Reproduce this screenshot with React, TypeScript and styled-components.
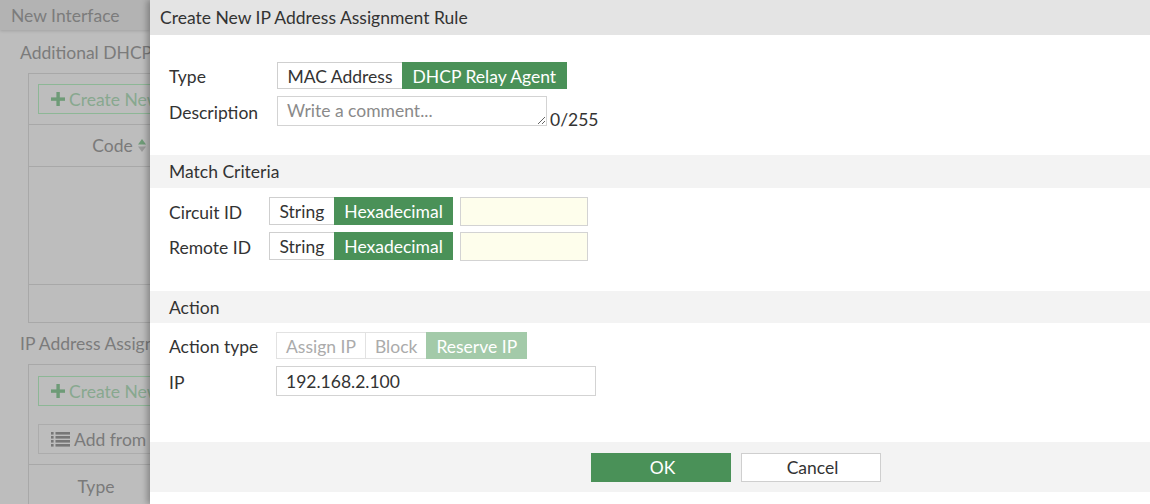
import React from 'react'
import styled, { createGlobalStyle } from 'styled-components'

const GlobalStyle = createGlobalStyle`
    html, body {
        margin: 0;
        padding: 0;
    }
    body {
        font-family: Lato, "Open Sans", sans-serif;
        font-size: 17.5px;
        color: #333;
    }
    * {
        box-sizing: border-box;
    }
`

const green = '#4a9158'

const Screen = styled.div`
    position: relative;
    width: 1150px;
    height: 504px;
    overflow: hidden;
    background: #bdbdbd;
`

/* ---------- page behind the dialog (dimmed) ---------- */

const BackPage = styled.div`
    width: 150px;
    height: 100%;
    overflow: hidden;
`

const PageHeader = styled.div`
    height: 30px;
    display: flex;
    align-items: center;
    padding-left: 11px;
    background: #b3b3b3;
    color: #7c7c7c;
    white-space: nowrap;
    box-shadow: 0 1px 3px rgba(0, 0, 0, 0.15);
`

const PageBody = styled.div`
    padding: 12px 0 0 20px;
`

const PageTitle = styled.div<{ $top?: number }>`
    height: 22px;
    line-height: 22px;
    margin-top: ${p => p.$top || 0}px;
    color: #7b7b7b;
    white-space: nowrap;
`

const TableBox = styled.div`
    width: 700px;
    margin: 9px 0 0 8px;
    border: 1px solid #a8a8a8;
`

const Toolbar = styled.div<{ $pt: number }>`
    display: flex;
    flex-direction: column;
    align-items: flex-start;
    gap: 18px;
    padding: ${p => p.$pt}px 0 10px 9px;
    border-bottom: 1px solid #a8a8a8;
`

const PageButton = styled.div<{ $green?: boolean }>`
    display: flex;
    align-items: center;
    gap: 4px;
    height: 30px;
    width: 200px;
    padding-left: 12px;
    border: 1px solid ${p => (p.$green ? '#8db796' : '#acacac')};
    color: ${p => (p.$green ? '#88a88f' : '#7a7a7a')};
    white-space: nowrap;
`

const HeadRow = styled.div<{ $h: number }>`
    height: ${p => p.$h}px;
    display: flex;
    align-items: center;
    border-bottom: 1px solid #a8a8a8;
`

const HeadCell = styled.div<{ $w: number }>`
    width: ${p => p.$w}px;
    display: flex;
    justify-content: center;
    align-items: center;
    gap: 5px;
    color: #7a7a7a;
`

const EmptyRow = styled.div<{ $h: number; $line?: boolean }>`
    height: ${p => p.$h}px;
    border-bottom: ${p => (p.$line ? '1px solid #a8a8a8' : 'none')};
`

const PlusIcon = () => (
    <svg width="14" height="14" viewBox="0 0 14 14">
        <rect x="5.4" y="0" width="3.4" height="14" fill="#6e9b77" />
        <rect x="0" y="5.4" width="14" height="3.4" fill="#6e9b77" />
    </svg>
)

const ListIcon = () => (
    <svg width="19" height="15" viewBox="0 0 19 15">
        {[0, 4, 8, 12].map(y => (
            <g key={y}>
                <rect x="0" y={y} width="2.6" height="2.6" fill="#777" />
                <rect x="4.5" y={y} width="14.5" height="2.6" fill="#777" />
            </g>
        ))}
    </svg>
)

const SortIcon = () => (
    <svg width="8" height="15" viewBox="0 0 8 15">
        <path d="M0 6.5 L4 1 L8 6.5 Z" fill="#6e9b77" />
        <path d="M0 8.5 L4 14 L8 8.5 Z" fill="#9a9a9a" />
    </svg>
)

/* ---------- dialog ---------- */

const Dialog = styled.div`
    position: absolute;
    top: 0;
    left: 150px;
    right: 0;
    bottom: 0;
    display: flex;
    flex-direction: column;
    background: #fff;
    box-shadow: -3px 0 6px rgba(0, 0, 0, 0.28);
`

const DialogHeader = styled.div`
    height: 35px;
    flex-shrink: 0;
    display: flex;
    align-items: center;
    padding-left: 10px;
    background: #e4e4e4;
    color: #333;
`

const Section = styled.div<{ $top: number }>`
    display: flex;
    flex-direction: column;
    gap: 7px;
    padding: 0 19px;
    margin-top: ${p => p.$top}px;
`

const SectionHeader = styled.div<{ $top: number; $h: number }>`
    height: ${p => p.$h}px;
    margin-top: ${p => p.$top}px;
    display: flex;
    align-items: center;
    padding-left: 19px;
    background: #f3f3f3;
    color: #333;
`

const Row = styled.div<{ $h: number }>`
    display: flex;
    align-items: center;
    height: ${p => p.$h}px;
`

const Label = styled.div<{ $w: number }>`
    width: ${p => p.$w}px;
    flex-shrink: 0;
    padding-top: 2px;
    color: #333;
    white-space: nowrap;
`

const ToggleGroup = styled.div`
    display: flex;
    height: 100%;
`

const Toggle = styled.div<{ $active?: boolean; $disabled?: boolean }>`
    display: flex;
    align-items: center;
    padding: 1px ${p => (p.$disabled ? 9 : 9.5)}px 0;
    margin-left: -1px;
    border: 1px solid
        ${p => (p.$active ? (p.$disabled ? '#a3caa9' : green) : p.$disabled ? '#e2e2e2' : '#cfcfcf')};
    background: ${p => (p.$active ? (p.$disabled ? '#a3caa9' : green) : '#fff')};
    color: ${p => (p.$active ? '#fff' : p.$disabled ? '#ababab' : '#333')};
    white-space: nowrap;
    &:first-child {
        margin-left: 0;
    }
`

const TextInput = styled.input<{ $w: number; $yellow?: boolean }>`
    width: ${p => p.$w}px;
    height: ${p => (p.$yellow ? 29 : 30)}px;
    margin: 0 0 0 ${p => (p.$yellow ? 7 : 0)}px;
    padding: 0 9px;
    border: 1px solid #d3d3d3;
    background: ${p => (p.$yellow ? '#fefeec' : '#fff')};
    font-family: inherit;
    font-size: 17.5px;
    color: #333;
    outline: none;
`

const Comment = styled.textarea`
    width: 270px;
    height: 30px;
    padding: 3px 9px;
    margin: 0;
    border: 1px solid #d3d3d3;
    font-family: inherit;
    font-size: 17.5px;
    line-height: 21px;
    color: #333;
    resize: both;
    overflow: hidden;
    &::placeholder {
        color: #8a8a8a;
    }
`

const Counter = styled.span`
    align-self: flex-end;
    margin: 0 0 -4px 3px;
    color: #333;
`

const Footer = styled.div`
    margin-top: auto;
    margin-bottom: 12px;
    height: 50px;
    display: flex;
    align-items: center;
    gap: 10px;
    padding-left: 441px;
    background: #f3f3f3;
`

const FooterButton = styled.div<{ $primary?: boolean }>`
    width: 140px;
    height: 29px;
    display: flex;
    align-items: center;
    justify-content: center;
    padding-left: 3px;
    border: 1px solid ${p => (p.$primary ? green : '#cfcfcf')};
    background: ${p => (p.$primary ? green : '#fff')};
    color: ${p => (p.$primary ? '#fff' : '#333')};
`

const App = () => {
    return (
        <>
            <GlobalStyle />
            <Screen>
                <BackPage>
                    <PageHeader>New Interface</PageHeader>
                    <PageBody>
                        <PageTitle>Additional DHCP Options</PageTitle>
                        <TableBox>
                            <Toolbar $pt={10}>
                                <PageButton $green>
                                    <PlusIcon />
                                    Create New
                                </PageButton>
                            </Toolbar>
                            <HeadRow $h={42}>
                                <HeadCell $w={180}>
                                    Code
                                    <SortIcon />
                                </HeadCell>
                            </HeadRow>
                            <EmptyRow $h={118} $line />
                            <EmptyRow $h={37} />
                        </TableBox>
                        <PageTitle $top={10}>IP Address Assignment Rules</PageTitle>
                        <TableBox>
                            <Toolbar $pt={11}>
                                <PageButton $green>
                                    <PlusIcon />
                                    Create New
                                </PageButton>
                                <PageButton>
                                    <ListIcon />
                                    Add from
                                </PageButton>
                            </Toolbar>
                            <HeadRow $h={44}>
                                <HeadCell $w={134}>Type</HeadCell>
                            </HeadRow>
                        </TableBox>
                    </PageBody>
                </BackPage>

                <Dialog>
                    <DialogHeader>Create New IP Address Assignment Rule</DialogHeader>

                    <Section $top={27}>
                        <Row $h={27}>
                            <Label $w={108}>Type</Label>
                            <ToggleGroup>
                                <Toggle>MAC Address</Toggle>
                                <Toggle $active>DHCP Relay Agent</Toggle>
                            </ToggleGroup>
                        </Row>
                        <Row $h={30}>
                            <Label $w={108}>Description</Label>
                            <Comment placeholder="Write a comment..." />
                            <Counter>0/255</Counter>
                        </Row>
                    </Section>

                    <SectionHeader $top={29} $h={33}>Match Criteria</SectionHeader>
                    <Section $top={9}>
                        <Row $h={28}>
                            <Label $w={100}>Circuit ID</Label>
                            <ToggleGroup>
                                <Toggle>String</Toggle>
                                <Toggle $active>Hexadecimal</Toggle>
                            </ToggleGroup>
                            <TextInput $w={128} $yellow />
                        </Row>
                        <Row $h={28}>
                            <Label $w={100}>Remote ID</Label>
                            <ToggleGroup>
                                <Toggle>String</Toggle>
                                <Toggle $active>Hexadecimal</Toggle>
                            </ToggleGroup>
                            <TextInput $w={128} $yellow />
                        </Row>
                    </Section>

                    <SectionHeader $top={31} $h={32}>Action</SectionHeader>
                    <Section $top={9}>
                        <Row $h={27}>
                            <Label $w={107}>Action type</Label>
                            <ToggleGroup>
                                <Toggle $disabled>Assign IP</Toggle>
                                <Toggle $disabled>Block</Toggle>
                                <Toggle $disabled $active>Reserve IP</Toggle>
                            </ToggleGroup>
                        </Row>
                        <Row $h={30}>
                            <Label $w={107}>IP</Label>
                            <TextInput $w={320} defaultValue="192.168.2.100" />
                        </Row>
                    </Section>

                    <Footer>
                        <FooterButton $primary>OK</FooterButton>
                        <FooterButton>Cancel</FooterButton>
                    </Footer>
                </Dialog>
            </Screen>
        </>
    )
}

export default App
